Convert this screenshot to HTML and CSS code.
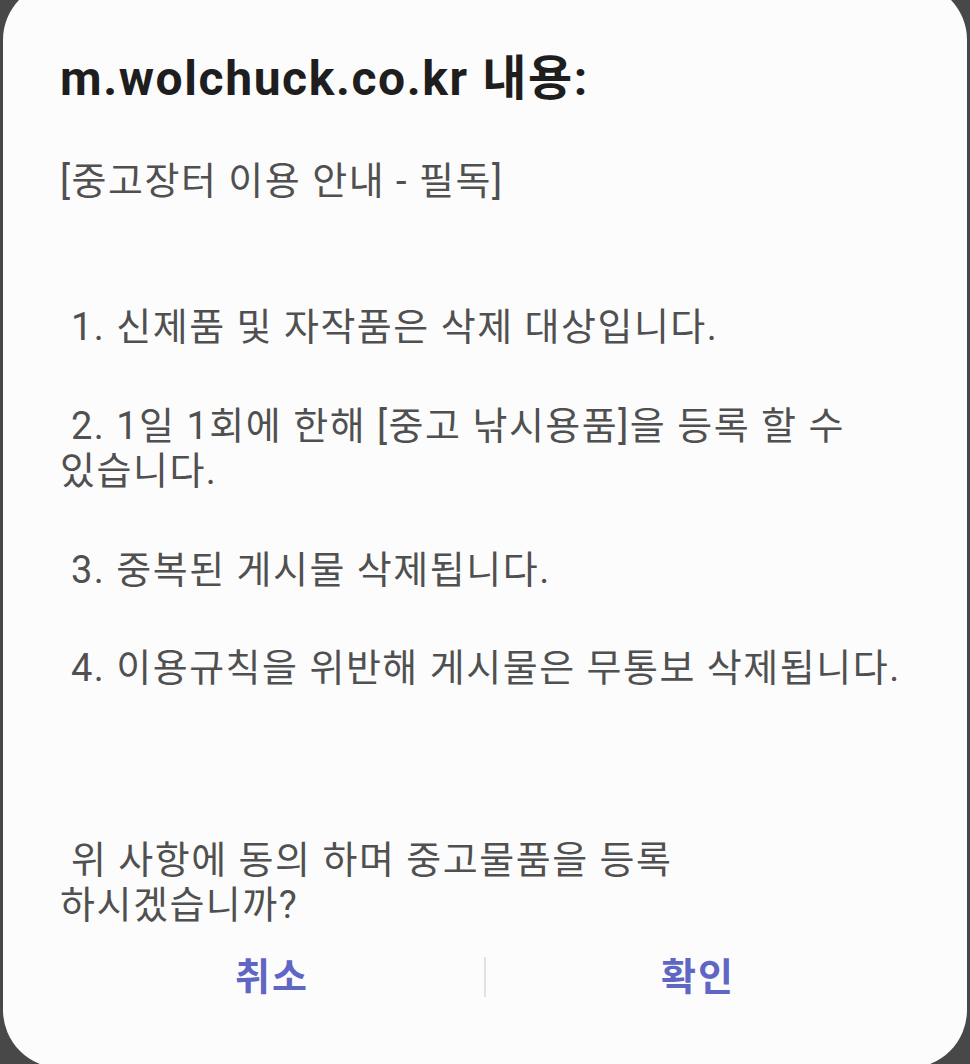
FILE: index.html
```html
<!DOCTYPE html>
<html lang="ko">
<head>
<meta charset="utf-8">
<title>m.wolchuck.co.kr 내용:</title>
<link rel="stylesheet" href="styles.css">
</head>
<body>
<div class="dialog">
  <h1 class="title">m.wolchuck.co.kr 내용:</h1>
  <div class="message">
    <p class="para p0">[중고장터 이용 안내 - 필독]</p>
    <p class="para p1"> 1. 신제품 및 자작품은 삭제 대상입니다.</p>
    <p class="para p2"> 2. 1일 1회에 한해 [중고 낚시용품]을 등록 할 수<br>있습니다.</p>
    <p class="para p3"> 3. 중복된 게시물 삭제됩니다.</p>
    <p class="para p4"> 4. 이용규칙을 위반해 게시물은 무통보 삭제됩니다.</p>
    <p class="para p5"> 위 사항에 동의 하며 중고물품을 등록<br>하시겠습니까?</p>
  </div>
  <div class="buttons">
    <button class="btn">취소</button>
    <span class="divider"></span>
    <button class="btn">확인</button>
  </div>
</div>
</body>
</html>
```

FILE: styles.css
```css
html, body {
  margin: 0;
  padding: 0;
  height: 100%;
  overflow: hidden;
}
body {
  background: #484848;
  padding: 0 3px;
  box-sizing: border-box;
}
.dialog {
  margin-top: -18px;
  height: 1086px;
  background: #fcfcfc;
  border-radius: 58px;
  box-sizing: border-box;
  padding: 69px 57px 0 57px;
  font-family: Roboto, "Noto Sans CJK KR", sans-serif;
}
.title {
  margin: 0;
  font-size: 48px;
  line-height: 56px;
  font-weight: 700;
  letter-spacing: 1.6px;
  color: #1e1e1e;
  white-space: pre;
}
.message {
  color: #505050;
}
.para {
  margin: 0;
  font-size: 38px;
  line-height: 45px;
  letter-spacing: 1.5px;
  white-space: pre;
}
.p0 { margin-top: 52px; }
.p1 { margin-top: 101px; }
.p2 { margin-top: 54px; }
.p3 { margin-top: 54px; }
.p4 { margin-top: 53px; }
.p5 { margin-top: 147px; }
.buttons {
  margin-top: 24px;
  display: flex;
  align-items: center;
  height: 50px;
}
.btn {
  flex: 1;
  border: 0;
  background: transparent;
  padding: 0;
  font-family: Roboto, "Noto Sans CJK KR", sans-serif;
  font-size: 38px;
  font-weight: 700;
  line-height: 50px;
  letter-spacing: 2px;
  color: #5f66c4;
}
.divider {
  width: 2px;
  height: 40px;
  background: #e2e2e2;
}
```
